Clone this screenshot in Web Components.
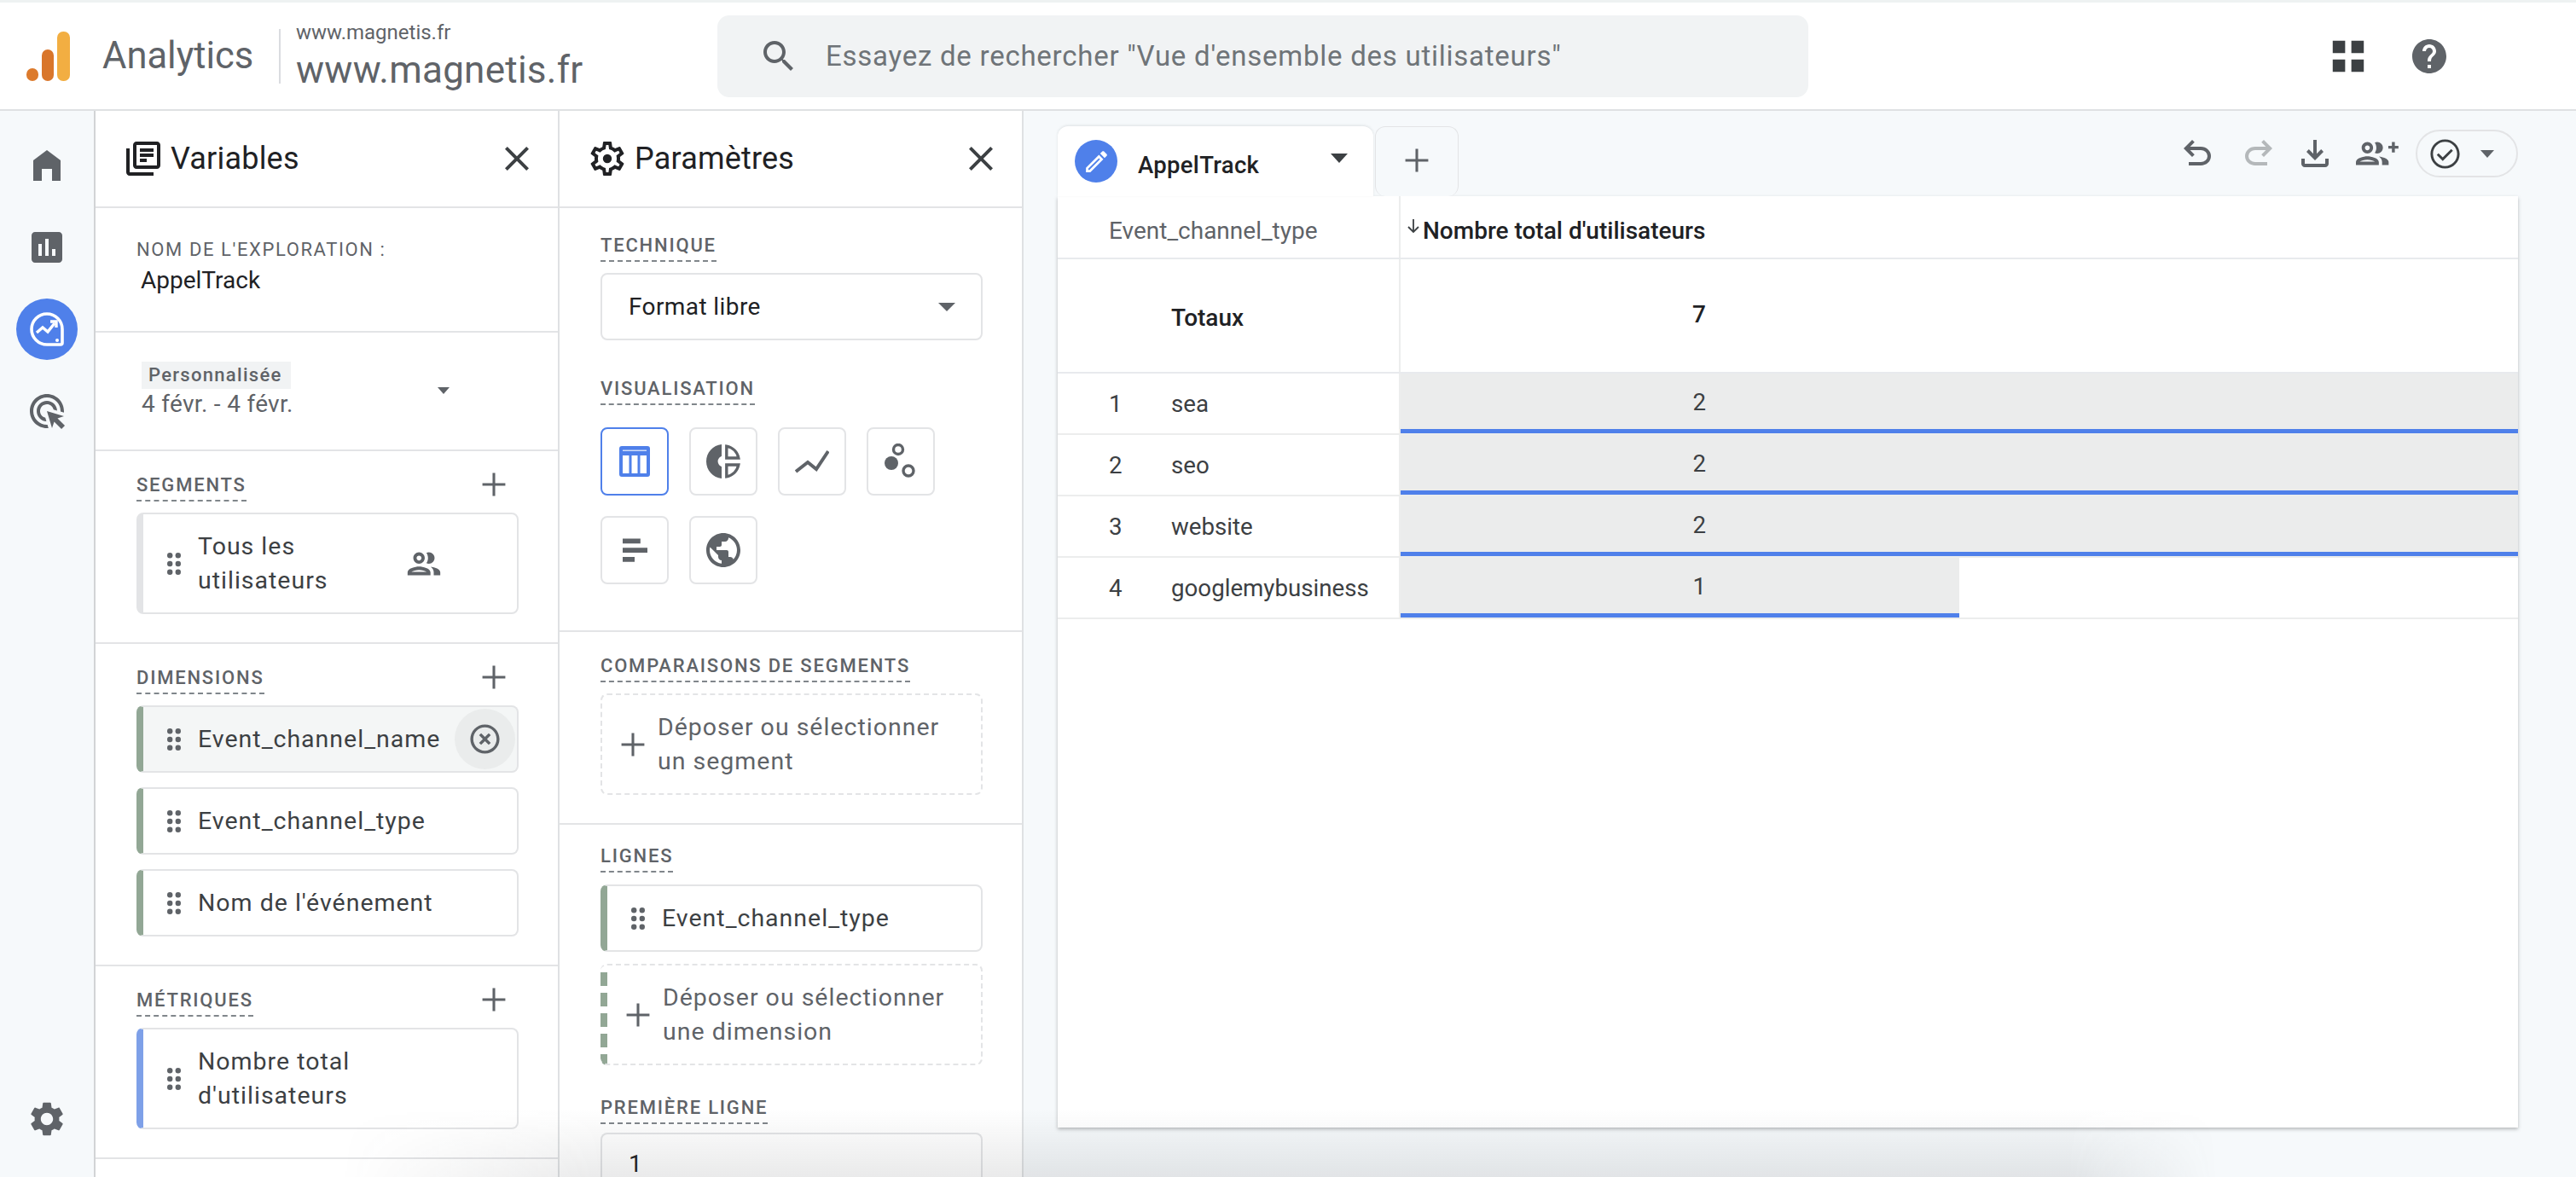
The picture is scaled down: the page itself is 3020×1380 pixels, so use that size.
<!DOCTYPE html>
<html lang="fr">
<head>
<meta charset="utf-8">
<title>Analytics</title>
<style>
    html, body { margin: 0; height: 1380px; overflow: hidden; background: #f6f9fb; }
    body { font-family: Roboto, "Liberation Sans", sans-serif; color: #3c4043; position: relative; }
</style>
</head>
<body>
<ga-header></ga-header>
<ga-shell>
    <ga-nav></ga-nav>

    <ga-panel heading="Variables" icon="library">
        <ga-section style="height: 110px; padding-top: 34px">
            <ga-field-name>AppelTrack</ga-field-name>
        </ga-section>
        <ga-section style="height: 103px; padding-top: 34px">
            <ga-date-range></ga-date-range>
        </ga-section>
        <ga-section>
            <ga-label add>Segments</ga-label>
            <ga-card band="#e3e4e6" grip trail="people">Tous les<br>utilisateurs</ga-card>
        </ga-section>
        <ga-section>
            <ga-label add>Dimensions</ga-label>
            <ga-card band="#92a795" grip hovered>Event_channel_name</ga-card>
            <ga-card band="#92a795" grip>Event_channel_type</ga-card>
            <ga-card band="#92a795" grip>Nom de l'événement</ga-card>
        </ga-section>
        <ga-section>
            <ga-label add>Métriques</ga-label>
            <ga-card band="#7ea0e8" grip>Nombre total<br>d'utilisateurs</ga-card>
        </ga-section>
    </ga-panel>

    <ga-panel heading="Paramètres" icon="tune">
        <ga-section style="height: 466px; padding-top: 29px">
            <ga-label>Technique</ga-label>
            <ga-select>Format libre</ga-select>
            <ga-label style="margin-top: 42px">Visualisation</ga-label>
            <ga-viz-grid></ga-viz-grid>
        </ga-section>
        <ga-section style="padding-bottom: 33px">
            <ga-label>Comparaisons de segments</ga-label>
            <ga-card dashed>Déposer ou sélectionner<br>un segment</ga-card>
        </ga-section>
        <ga-section style="padding-top: 22px; padding-bottom: 0; border-bottom: 0">
            <ga-label style="margin-bottom: 14px">Lignes</ga-label>
            <ga-card band="#92a795" grip style="margin-bottom: 14px">Event_channel_type</ga-card>
            <ga-card dashed band="#92a795" style="margin-bottom: 0">Déposer ou sélectionner<br>une dimension</ga-card>
            <ga-label style="margin-top: 35px; margin-bottom: 10px">Première ligne</ga-label>
            <ga-select plain>1</ga-select>
        </ga-section>
    </ga-panel>

    <ga-main>
        <ga-table>
            <ga-row num="1" name="sea" value="2" pct="100"></ga-row>
            <ga-row num="2" name="seo" value="2" pct="100"></ga-row>
            <ga-row num="3" name="website" value="2" pct="100"></ga-row>
            <ga-row num="4" name="googlemybusiness" value="1" pct="50"></ga-row>
        </ga-table>
    </ga-main>
</ga-shell>
<ga-shade></ga-shade>

<script>
const ICONS = {
    home: 'M4 21V9l8-6 8 6v12h-5v-7h-6v7z',
    reports: 'M19 3H5c-1.1 0-2 .9-2 2v14c0 1.1.9 2 2 2h14c1.1 0 2-.9 2-2V5c0-1.1-.9-2-2-2zM9 17H7v-7h2v7zm4 0h-2V7h2v10zm4 0h-2v-4h2v4z',
    ads: 'M11.71 17.99C8.53 17.84 6 15.22 6 12c0-3.31 2.69-6 6-6 3.22 0 5.84 2.53 5.99 5.71l-2.1-.63C15.48 9.31 13.89 8 12 8c-2.21 0-4 1.79-4 4 0 1.89 1.31 3.48 3.08 3.89l.63 2.1zM22 12c0 .3-.01.6-.04.9l-1.97-.59c.01-.1.01-.21.01-.31 0-4.42-3.58-8-8-8s-8 3.58-8 8 3.58 8 8 8c.1 0 .21 0 .31-.01l.59 1.97c-.3.03-.6.04-.9.04-5.52 0-10-4.48-10-10S6.48 2 12 2s10 4.48 10 10zm-3.77 4.26L22 15l-10-3 3 10 1.26-3.77 4.27 4.27 1.98-1.98-4.28-4.26z',
    gear: 'M19.14 12.94c.04-.3.06-.61.06-.94 0-.32-.02-.64-.07-.94l2.03-1.58c.18-.14.23-.41.12-.61l-1.92-3.32c-.12-.22-.37-.29-.59-.22l-2.39.96c-.5-.38-1.03-.7-1.62-.94l-.36-2.54c-.04-.24-.24-.41-.48-.41h-3.84c-.24 0-.43.17-.47.41l-.36 2.54c-.59.24-1.13.57-1.62.94l-2.39-.96c-.22-.08-.47 0-.59.22L2.74 8.87c-.12.21-.08.47.12.61l2.03 1.58c-.05.3-.09.63-.09.94s.02.64.07.94l-2.03 1.58c-.18.14-.23.41-.12.61l1.92 3.32c.12.22.37.29.59.22l2.39-.96c.5.38 1.03.7 1.62.94l.36 2.54c.05.24.24.41.48.41h3.84c.24 0 .44-.17.47-.41l.36-2.54c.59-.24 1.13-.56 1.62-.94l2.39.96c.22.08.47 0 .59-.22l1.92-3.32c.12-.22.07-.47-.12-.61l-2.01-1.58zM12 15.6c-1.98 0-3.6-1.62-3.6-3.6s1.62-3.6 3.6-3.6 3.6 1.62 3.6 3.6-1.62 3.6-3.6 3.6z',
    tune: 'M19.43 12.98c.04-.32.07-.64.07-.98 0-.34-.03-.66-.07-.98l2.11-1.65c.19-.15.24-.42.12-.64l-2-3.46c-.09-.16-.26-.25-.44-.25-.06 0-.12.01-.17.03l-2.49 1c-.52-.4-1.08-.73-1.69-.98l-.38-2.65C14.46 2.18 14.25 2 14 2h-4c-.25 0-.46.18-.49.42l-.38 2.65c-.61.25-1.17.59-1.69.98l-2.49-1c-.06-.02-.12-.03-.18-.03-.17 0-.34.09-.43.25l-2 3.46c-.13.22-.07.49.12.64l2.11 1.65c-.04.32-.07.65-.07.98 0 .33.03.66.07.98l-2.11 1.65c-.19.15-.24.42-.12.64l2 3.46c.09.16.26.25.44.25.06 0 .12-.01.17-.03l2.49-1c.52.4 1.08.73 1.69.98l.38 2.65c.03.24.24.42.49.42h4c.25 0 .46-.18.49-.42l.38-2.65c.61-.25 1.17-.59 1.69-.98l2.49 1c.06.02.12.03.18.03.17 0 .34-.09.43-.25l2-3.46c.12-.22.07-.49-.12-.64l-2.11-1.65zm-1.98-1.71c.04.31.05.52.05.73 0 .21-.02.43-.05.73l-.14 1.13.89.7 1.08.84-.7 1.21-1.27-.51-1.04-.42-.9.68c-.43.32-.84.56-1.25.73l-1.06.43-.16 1.13-.2 1.35h-1.4l-.19-1.35-.16-1.13-1.06-.43c-.43-.18-.83-.41-1.23-.71l-.91-.7-1.06.43-1.27.51-.7-1.21 1.08-.84.89-.7-.14-1.13c-.03-.31-.05-.54-.05-.74s.02-.43.05-.73l.14-1.13-.89-.7-1.08-.84.7-1.21 1.27.51 1.04.42.9-.68c.43-.32.84-.56 1.25-.73l1.06-.43.16-1.13.2-1.35h1.39l.19 1.35.16 1.13 1.06.43c.43.18.83.41 1.23.71l.91.7 1.06-.43 1.27-.51.7 1.21-1.07.85-.89.7.14 1.13zM12 9.4a2.6 2.6 0 1 0 0 5.2 2.6 2.6 0 0 0 0-5.2z',
    library: 'M4 6H2v14c0 1.1.9 2 2 2h14v-2H4V6zm16-4H8c-1.1 0-2 .9-2 2v12c0 1.1.9 2 2 2h12c1.1 0 2-.9 2-2V4c0-1.1-.9-2-2-2zm0 14H8V4h12v12zM10 9h8v2h-8zm0 3h4v2h-4zm0-6h8v2h-8z',
    close: 'M19 6.41L17.59 5 12 10.59 6.41 5 5 6.41 10.59 12 5 17.59 6.41 19 12 13.41 17.59 19 19 17.59 13.41 12z',
    add: 'M19 12.8h-6.2V19h-1.6v-6.2H5v-1.6h6.2V5h1.6v6.2H19z',
    people: 'M9 13.75c-2.34 0-7 1.17-7 3.5V19h14v-1.75c0-2.33-4.66-3.5-7-3.5zM4.34 17c.84-.58 2.87-1.25 4.66-1.25s3.82.67 4.66 1.25H4.34zM9 12c1.93 0 3.5-1.57 3.5-3.5S10.93 5 9 5 5.5 6.57 5.5 8.5 7.07 12 9 12zm0-5c.83 0 1.5.67 1.5 1.5S9.83 10 9 10s-1.5-.67-1.5-1.5S8.17 7 9 7zm7.04 6.81c1.16.84 1.96 1.96 1.96 3.44V19h4v-1.75c0-2.02-3.5-3.17-5.96-3.44zM15 12c1.93 0 3.5-1.57 3.5-3.5S16.93 5 15 5c-.54 0-1.04.13-1.5.35.63.89 1 1.98 1 3.15s-.37 2.26-1 3.15c.46.22.96.35 1.5.35z',
    cancel: 'M14.59 8L12 10.59 9.41 8 8 9.41 10.59 12 8 14.59 9.41 16 12 13.41 14.59 16 16 14.59 13.41 12 16 9.41 14.59 8zM12 2C6.47 2 2 6.47 2 12s4.47 10 10 10 10-4.47 10-10S17.53 2 12 2zm0 18c-4.41 0-8-3.59-8-8s3.59-8 8-8 8 3.59 8 8-3.59 8-8 8z',
    search: 'M15.5 14h-.79l-.28-.27C15.41 12.59 16 11.11 16 9.5 16 5.91 13.09 3 9.5 3S3 5.91 3 9.5 5.91 16 9.5 16c1.61 0 3.09-.59 4.23-1.57l.27.28v.79l5 4.99L20.49 19l-4.99-5zm-6 0C7.01 14 5 11.99 5 9.5S7.01 5 9.5 5 14 7.01 14 9.5 11.99 14 9.5 14z',
    help: 'M12 2C6.48 2 2 6.48 2 12s4.48 10 10 10 10-4.48 10-10S17.52 2 12 2zm1 17h-2v-2h2v2zm2.07-7.75l-.9.92C13.45 12.9 13 13.5 13 15h-2v-.5c0-1.1.45-2.1 1.17-2.83l1.24-1.26c.37-.36.59-.86.59-1.41 0-1.1-.9-2-2-2s-2 .9-2 2H8c0-2.21 1.79-4 4-4s4 1.79 4 4c0 .88-.36 1.68-.93 2.25z',
    apps: 'M2.500 2.500h7.600v7.600H2.500zM13.900 2.500h7.600v7.600h-7.600zM2.500 13.900h7.600v7.600H2.500zM13.900 13.900h7.600v7.600h-7.600z',
    undo: 'M7 19v-2h7.1q1.575 0 2.738-1Q18 15 18 13.5T16.838 11q-1.163-1-2.738-1H7.8l2.6 2.6L9 14 4 9l5-5 1.4 1.4L7.8 8h6.3q2.425 0 4.163 1.575Q20 11.15 20 13.5q0 2.35-1.737 3.925Q16.525 19 14.1 19z',
    download: 'M12 16l-5-5 1.4-1.45 2.6 2.6V4h2v8.15l2.6-2.6L17 11l-5 5zm-6 4c-.55 0-1.02-.2-1.41-.59C4.2 19.02 4 18.55 4 18v-3h2v3h12v-3h2v3c0 .55-.2 1.02-.59 1.41-.39.39-.86.59-1.41.59H6z',
    check: 'M16.2 8.6L10.4 14.4l-2.9-2.9-1.2 1.2 4.1 4.1 7-7zM12 2C6.48 2 2 6.48 2 12s4.48 10 10 10 10-4.48 10-10S17.52 2 12 2zm0 18.3c-4.58 0-8.3-3.72-8.3-8.3S7.42 3.7 12 3.7s8.3 3.72 8.3 8.3-3.72 8.3-8.3 8.3z',
    edit: 'M14.06 9.02l.92.92L5.92 19H5v-.92l9.06-9.06M17.66 3c-.25 0-.51.1-.7.29l-1.83 1.83 3.75 3.75 1.83-1.83c.39-.39.39-1.02 0-1.41l-2.34-2.34c-.2-.2-.45-.29-.71-.29zm-3.6 3.19L3 17.25V21h3.75L17.81 9.94l-3.75-3.75z',
    globe: 'M12 2C6.48 2 2 6.48 2 12s4.48 10 10 10 10-4.48 10-10S17.52 2 12 2zm-1 17.93c-3.95-.49-7-3.85-7-7.93 0-.62.08-1.21.21-1.79L9 15v1c0 1.1.9 2 2 2v1.93zm6.9-2.54c-.26-.81-1-1.39-1.9-1.39h-1v-3c0-.55-.45-1-1-1H8v-2h2c.55 0 1-.45 1-1V7h2c1.1 0 2-.9 2-2v-.41c2.93 1.19 5 4.06 5 7.41 0 2.08-.8 3.97-2.1 5.39z',
    bars: 'M5 5.200h10.400v2.900H5zM5 10.600h14.500v2.900H5zM5 16h7v2.900H5z'
}

function icon(name, size = 48, color = 'currentColor', extra = '') {
    return `<svg xmlns="http://www.w3.org/2000/svg" width="${size}" height="${size}" viewBox="0 0 24 24" fill="${color}" style="flex:none;display:block;${extra}"><path d="${ICONS[name]}"/></svg>`
}

const DOTS = `<svg class="grip" width="16" height="26" viewBox="0 0 16 26" fill="#5f6368"><circle cx="3.2" cy="3.2" r="3.2"/><circle cx="12.8" cy="3.2" r="3.2"/><circle cx="3.2" cy="13" r="3.2"/><circle cx="12.8" cy="13" r="3.2"/><circle cx="3.2" cy="22.8" r="3.2"/><circle cx="12.8" cy="22.8" r="3.2"/></svg>`

class Base extends HTMLElement {
    constructor() {
        super()
        this.attachShadow({ mode: 'open' })
    }

    connectedCallback() {
        this.shadowRoot.innerHTML = this.render()
    }
}

class GaHeader extends Base {
    render() {
        return /*html*/`
            <style>
                :host { display: flex; align-items: center; box-sizing: border-box; height: 130px; background: #fff;
                    border-top: 3px solid #eef2f2; border-bottom: 2px solid #dfe1e3; color: #5f6368; }
                .logo { margin-left: 31px; }
                .brand { margin-left: 38px; width: 207px; font-size: 43.5px; line-height: 60px; }
                .sep { width: 2px; height: 64px; background: #dadce0; }
                .site { margin-left: 18px; width: 494px; display: flex; flex-direction: column; }
                .site small { font-size: 24px; line-height: 30px; }
                .site span { font-size: 44px; line-height: 54px; letter-spacing: .25px; padding-top: 2px; }
                .search { display: flex; align-items: center; box-sizing: border-box; width: 1279px; height: 96px; padding-left: 48px;
                    background: #f1f3f4; border-radius: 14px; font-size: 33px; letter-spacing: .75px; color: #6f7478; }
                .search span { margin-left: 31px; }
                .apps { margin-left: 610px; color: #3c4043; }
                .help { margin-left: 48px; }
            </style>
            <svg class="logo" width="51" height="58" viewBox="0 0 51 58">
                <rect x="0" y="43" width="14" height="15" rx="7" fill="#dc7a2c"/>
                <rect x="18" y="21" width="14" height="37" rx="7" fill="#d9762b"/>
                <rect x="36" y="0" width="15" height="58" rx="7" fill="#f2ae42"/>
            </svg>
            <div class="brand">Analytics</div>
            <div class="sep"></div>
            <div class="site"><small>www.magnetis.fr</small><span>www.magnetis.fr</span></div>
            <div class="search">${icon('search', 48, '#5f6368')}<span>Essayez de rechercher "Vue d'ensemble des utilisateurs"</span></div>
            <div class="apps">${icon('apps', 46)}</div>
            <div class="help">${icon('help', 48)}</div>
        `
    }
}

class GaShell extends Base {
    render() {
        return /*html*/`
            <style>
                :host { display: flex; height: 1250px; overflow: hidden; }
            </style>
            <slot></slot>
        `
    }
}

class GaNav extends Base {
    render() {
        return /*html*/`
            <style>
                :host { display: flex; flex-direction: column; align-items: center; gap: 24px; box-sizing: border-box; width: 112px; flex: none;
                    padding: 28px 0 32px; border-right: 2px solid #d2d4d6; color: #5f6368; }
                .item { display: flex; align-items: center; justify-content: center; width: 72px; height: 72px; border-radius: 50%; }
                .active { background: #4f80ea; }
                .end { margin-top: auto; }
            </style>
            <div class="item">${icon('home')}</div>
            <div class="item">${icon('reports')}</div>
            <div class="item active">
                <svg width="42" height="42" viewBox="0 0 42 42" fill="none" stroke="#fff" stroke-width="3.6">
                    <path d="M21 3a18 18 0 1 0 0 36h16a2 2 0 0 0 2-2V21A18 18 0 0 0 21 3z"/>
                    <path d="M9 25l7-6 6 5 8-10" stroke-width="3.4"/>
                    <path d="M25 12h7v7" stroke-width="3.4"/>
                    <circle cx="33" cy="34" r="2" fill="#fff" stroke="none"/>
                </svg>
            </div>
            <div class="item">${icon('ads')}</div>
            <div class="item end">${icon('gear')}</div>
        `
    }
}

class GaPanel extends Base {
    render() {
        return /*html*/`
            <style>
                :host { display: block; box-sizing: border-box; width: 544px; flex: none; background: #fff; border-right: 2px solid #dfe1e3; overflow: hidden; }
                .head { display: flex; align-items: center; box-sizing: border-box; height: 114px; border-bottom: 2px solid #e3e4e6;
                    padding: 0 24px 0 32px; color: #202124; }
                .head span { margin-left: 8px; font-size: 36px; letter-spacing: .2px; flex: 1; }
                .x { color: #3c4043; }
            </style>
            <div class="head">${icon(this.getAttribute('icon'), 48)}<span>${this.getAttribute('heading')}</span><div class="x">${icon('close', 48)}</div></div>
            <slot></slot>
        `
    }
}

class GaSection extends Base {
    render() {
        return /*html*/`
            <style>
                :host { display: block; box-sizing: content-box; padding: 25px 46px 33px 48px; border-bottom: 2px solid #e3e4e6; }
                :host([style*="height"]) { padding-bottom: 0; }
            </style>
            <slot></slot>
        `
    }
}

class GaLabel extends Base {
    render() {
        return /*html*/`
            <style>
                :host { display: flex; align-items: flex-start; justify-content: space-between; margin-bottom: 13px; height: 34px;
                    font-size: 22px; font-weight: 500; letter-spacing: 1.8px; text-transform: uppercase; color: #5f6368; }
                span { line-height: 30px; padding-bottom: 2px; border-bottom: 2px dashed #80868b; white-space: nowrap; }
                svg { margin: -9px 6px 0 0; }
            </style>
            <span><slot></slot></span>
            ${this.hasAttribute('add') ? icon('add', 46) : ''}
        `
    }
}

class GaCard extends Base {
    render() {
        const band = this.getAttribute('band')
        const dashed = this.hasAttribute('dashed')
        const hovered = this.hasAttribute('hovered')
        return /*html*/`
            <style>
                :host { display: flex; align-items: center; box-sizing: border-box; width: 448px; padding: 17.5px 0; margin-bottom: 17px;
                    border: 2px solid #e3e4e6; border-radius: 8px; font-size: 28.5px; line-height: 40px; letter-spacing: 1px; color: #3c4043; background: #fff; position: relative; }
                :host(:last-child) { margin-bottom: 0; }
                :host([grip]) { border-left: 8px solid ${band}; }
                :host([dashed]) { border: 2px dashed #e3e4e6; color: #5f6368; }
                :host([dashed][band]) { border-left: 0; background: repeating-linear-gradient(${band} 0 16px, transparent 16px 24px) left 8px / 8px 100% no-repeat #fff; padding-left: 8px; }
                :host([hovered]) { background: #f4f6f6; }
                .grip { flex: none; margin: 0 20px 0 28px; }
                .plus { margin: 0 6px 0 13px; }
                .text { flex: 1; white-space: nowrap; }
                .trail { margin: 0 86px 0 0; color: #5f6368; }
                .clear { display: flex; align-items: center; justify-content: center; width: 71px; height: 71px; margin: -16px 2px -16px 0; border-radius: 50%; background: #eaecec; color: #5f6368; position: absolute; right: 0; }
            </style>
            ${this.hasAttribute('grip') ? DOTS : ''}
            ${dashed ? `<div class="plus" style="color:#5f6368">${icon('add', 46)}</div>` : ''}
            <div class="text"><slot></slot></div>
            ${this.hasAttribute('trail') ? `<div class="trail">${icon(this.getAttribute('trail'), 46)}</div>` : ''}
            ${hovered ? `<div class="clear">${icon('cancel', 41)}</div>` : ''}
        `
    }
}

class GaFieldName extends Base {
    render() {
        return /*html*/`
            <style>
                :host { display: block; font-size: 28px; color: #202124; }
                small { display: block; font-size: 22px; letter-spacing: 1.6px; color: #5f6368; line-height: 30px; margin-bottom: 3px; }
                span { margin-left: 5px; line-height: 36px; }
            </style>
            <small>NOM DE L'EXPLORATION :</small>
            <span><slot></slot></span>
        `
    }
}

class GaDateRange extends Base {
    render() {
        return /*html*/`
            <style>
                :host { display: flex; align-items: center; margin-left: 6px; color: #5f6368; }
                .text { width: 174px; }
                .chip { display: inline-block; padding: 0 10px 0 8px; height: 32px; line-height: 32px; background: #f1f3f4; font-size: 22px; font-weight: 500; letter-spacing: 1.3px; white-space: nowrap; }
                .date { font-size: 28px; line-height: 36px; margin-top: 0; white-space: nowrap; letter-spacing: .3px; }
                .caret { margin-left: 173px; width: 0; height: 0; border: 7px solid transparent; border-top: 8px solid #5f6368; border-bottom: 0; }
            </style>
            <div class="text"><span class="chip">Personnalisée</span><div class="date">4 févr. - 4 févr.</div></div>
            <div class="caret"></div>
        `
    }
}

class GaSelect extends Base {
    render() {
        return /*html*/`
            <style>
                :host { display: flex; align-items: center; justify-content: space-between; box-sizing: border-box; width: 448px; height: 79px; padding: 0 30px 0 31px;
                    border: 2px solid #e3e4e6; border-radius: 8px; font-size: 28px; letter-spacing: .4px; color: #202124; background: #fff; }
                :host([plain]) { height: 53px; border-bottom: 0; border-radius: 8px 8px 0 0; align-items: flex-start; padding-top: 18px; line-height: 33px; }
                i { width: 0; height: 0; border: 10px solid transparent; border-top: 10px solid #5f6368; border-bottom: 0; }
            </style>
            <slot></slot>
            ${this.hasAttribute('plain') ? '' : '<i></i>'}
        `
    }
}

class GaVizGrid extends Base {
    render() {
        return /*html*/`
            <style>
                :host { display: grid; grid-template-columns: repeat(4, 80px); grid-auto-rows: 80px; gap: 24px; margin-top: 26px; }
                div { display: flex; align-items: center; justify-content: center; box-sizing: border-box; border: 2px solid #e3e4e6; border-radius: 8px; color: #5f6368; background: #fff; }
                .on { border-color: #4f80ea; }
            </style>
            <div class="on">
                <svg width="36" height="36" viewBox="0 0 36 36" fill="#4f80ea" fill-rule="evenodd"><path d="M3 0h30a3 3 0 0 1 3 3v30a3 3 0 0 1-3 3H3a3 3 0 0 1-3-3V3a3 3 0 0 1 3-3zM4 11v21h7.500V11zM14.500 11v21h7V11zM24.500 11v21H32V11z"/><path d="M4 4.500h28v1.500H4z" fill="#cfdcf8"/></svg>
            </div>
            <div>
                <svg width="48" height="48" viewBox="0 0 24 24" fill="currentColor">
                    <path d="M11 8.900V2c-5 .5-9 4.790-9 10s4 9.500 9 10v-6.900c-1-.41-2.200-1.600-2.200-3.100s1.200-2.690 2.200-3.100z"/>
                    <path d="M13.900 3.100c3.600.7 6.300 3.400 7 6.900h-7zM13.900 14h7c-.7 3.500-3.400 6.200-7 6.900z" fill="none" stroke="currentColor" stroke-width="1.700"/>
                </svg>
            </div>
            <div>
                <svg width="40" height="28" viewBox="0 0 40 28" fill="none" stroke="currentColor" stroke-width="4"><path d="M1 26l14-11 10 8L39 2"/></svg>
            </div>
            <div>
                <svg width="38" height="42" viewBox="0 0 38 42" fill="currentColor"><circle cx="16" cy="7" r="5.500" fill="none" stroke="currentColor" stroke-width="3.400"/><circle cx="8" cy="23" r="8"/><circle cx="28" cy="32" r="6" fill="none" stroke="currentColor" stroke-width="3.400"/></svg>
            </div>
            <div>${icon('bars', 48)}</div>
            <div>${icon('globe', 48)}</div>
        `
    }
}

class GaMain extends Base {
    render() {
        return /*html*/`
            <style>
                :host { display: block; flex: 1; box-sizing: border-box; padding: 18px 68px 0 40px; }
                .bar { display: flex; align-items: stretch; height: 82px; }
                .tab { display: flex; align-items: center; box-sizing: border-box; width: 370px; padding: 0 30px 0 20px; background: #fff; border-radius: 12px 12px 0 0; box-shadow: 0 -1px 3px rgba(60,64,67,.12); }
                .pen { display: flex; align-items: center; justify-content: center; width: 50px; height: 50px; border-radius: 50%; background: #4f80ea; }
                .name { flex: 1; margin-left: 24px; font-size: 27.5px; font-weight: 500; letter-spacing: .3px; color: #202124; padding-top: 8px; }
                i { width: 0; height: 0; border: 10px solid transparent; border-top: 11px solid #3c4043; border-bottom: 0; margin-bottom: 8px; }
                .new { display: flex; align-items: center; justify-content: center; box-sizing: border-box; width: 98px; margin-left: 2px; padding-bottom: 4px; background: #f6f9fb; border: 1px solid #e3e4e6; border-bottom: 0; border-radius: 12px; color: #5f6368; }
                .tools { display: flex; align-items: center; margin-left: auto; height: 64px; color: #5f6368; }
                .pill { display: flex; align-items: center; box-sizing: border-box; width: 120px; height: 56px; margin-left: 20px; padding: 0 26px 0 12px; border: 2px solid #e3e4e6; border-radius: 28px; color: #3c4043; justify-content: space-between; }
                .pill i { border-width: 8px; border-top-width: 9px; border-bottom: 0; margin: 0; border-top-color: #5f6368; }
            </style>
            <div class="bar">
                <div class="tab"><div class="pen">${icon('edit', 33, '#fff')}</div><div class="name">AppelTrack</div><i></i></div>
                <div class="new">${icon('add', 46)}</div>
                <div class="tools">
                    ${icon('undo')}
                    ${icon('undo', 48, '#b4b8ba', 'transform: scaleX(-1); margin-left: 24px')}
                    ${icon('download', 48, 'currentColor', 'margin-left: 18px')}
                    <svg width="54" height="46" viewBox="0 0 28 24" fill="currentColor" style="margin-left: 20px"><path d="${ICONS.people}"/><path d="M21.800 7.300H24V5h1.800v2.300h2.200V9h-2.200v2.300H24V9h-2.200z"/></svg>
                    <div class="pill">${icon('check', 41)}<i></i></div>
                </div>
            </div>
            <slot></slot>
        `
    }
}

class GaTable extends Base {
    render() {
        return /*html*/`
            <style>
                :host { display: block; box-sizing: border-box; height: 1092px; background: #fff; box-shadow: 0 2px 4px rgba(60,64,67,.35); font-size: 28px; color: #3c4043; }
                .row { display: grid; grid-template-columns: 400px 1fr; }
                .row > div { display: flex; align-items: center; }
                .left { padding-left: 60px; }
                .right { border-left: 2px solid #eceded; padding-left: 7px; }
                .head { height: 72px; color: #5f6368; }
                .head > div { padding-top: 8px; }
                .head, .total { box-sizing: content-box; border-bottom: 2px solid #e8eaed; }
                .head .right { font-weight: 500; color: #202124; }
                .head svg { margin: -10px 3px 0 0; }
                .total { height: 132px; color: #202124; font-weight: 500; }
                .total .left { padding-left: 133px; padding-top: 4px; box-sizing: border-box; }
                .total .right { justify-content: flex-start; padding-left: 0; }
                .total .right span { width: 358px; text-align: right; margin-top: -4px; }
            </style>
            <div class="row head">
                <div class="left">Event_channel_type</div>
                <div class="right">
                    <svg width="16" height="18" viewBox="0 0 16 18" fill="none" stroke="#3c4043" stroke-width="1.800"><path d="M8 1v15M2 10l6 6 6-6"/></svg>
                    Nombre total d'utilisateurs
                </div>
            </div>
            <div class="row total">
                <div class="left">Totaux</div>
                <div class="right"><span>7</span></div>
            </div>
            <slot></slot>
        `
    }
}

class GaRow extends Base {
    render() {
        return /*html*/`
            <style>
                :host { display: grid; grid-template-columns: 400px 1fr; box-sizing: border-box; height: 72px; border-bottom: 2px solid #eceded; font-size: 27.7px; color: #3c4043; }
                .left { display: flex; align-items: center; padding-left: 60px; }
                .num { width: 73px; }
                .bar { display: flex; align-items: center; border-left: 2px solid #eceded; padding-bottom: 4px;
                    background:
                        linear-gradient(#4f80ea, #4f80ea) left bottom / ${this.getAttribute('pct')}% 5px no-repeat,
                        linear-gradient(#ebecec, #ebecec) left top / ${this.getAttribute('pct')}% 100% no-repeat; }
                .bar span { width: 358px; text-align: right; }
            </style>
            <div class="left"><span class="num">${this.getAttribute('num')}</span><span>${this.getAttribute('name')}</span></div>
            <div class="bar"><span>${this.getAttribute('value')}</span></div>
        `
    }
}

// soft grey haze that sits over the bottom edge of the page
class GaShade extends Base {
    render() {
        return /*html*/`
            <style>
                :host { position: absolute; left: 400px; width: 2200px; top: 1300px; height: 80px; pointer-events: none;
                    background: linear-gradient(rgba(60,64,67,0), rgba(60,64,67,.11));
                    -webkit-mask-image: linear-gradient(to right, transparent, #000 14%, #000 92%, transparent); }
            </style>
        `
    }
}

customElements.define('ga-header', GaHeader)
customElements.define('ga-shell', GaShell)
customElements.define('ga-nav', GaNav)
customElements.define('ga-panel', GaPanel)
customElements.define('ga-section', GaSection)
customElements.define('ga-label', GaLabel)
customElements.define('ga-card', GaCard)
customElements.define('ga-field-name', GaFieldName)
customElements.define('ga-date-range', GaDateRange)
customElements.define('ga-select', GaSelect)
customElements.define('ga-viz-grid', GaVizGrid)
customElements.define('ga-main', GaMain)
customElements.define('ga-table', GaTable)
customElements.define('ga-row', GaRow)
customElements.define('ga-shade', GaShade)
</script>
</body>
</html>
